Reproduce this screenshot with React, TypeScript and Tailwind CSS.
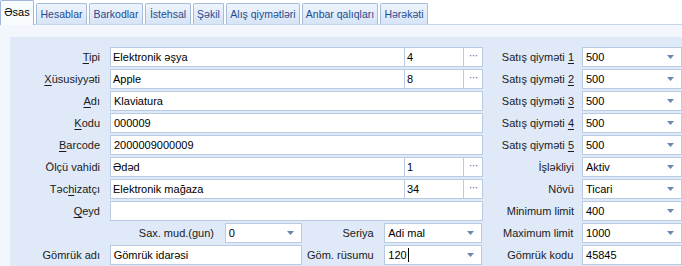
import React from 'react';

const font = { fontFamily: 'Tahoma, "Liberation Sans", Arial, sans-serif' };

function Arrow() {
  return (
    <svg width="7" height="4" viewBox="0 0 7 4" className="shrink-0">
      <path d="M0 0h7L3.5 4z" fill="#6a86b0" />
    </svg>
  );
}

function Label({ children, w }: { children: React.ReactNode; w: string }) {
  return <div className={`${w} shrink-0 text-right text-[#1b1b1b] leading-[20px]`}>{children}</div>;
}

function Input({ value, w }: { value?: string; w: string }) {
  return (
    <div className={`${w} h-[20px] shrink-0 bg-white border border-[#b9cbe3] pl-[3px] leading-[18px] text-black`}>
      {value}
    </div>
  );
}

function Combo({ value, w, cursor }: { value: string; w: string; cursor?: boolean }) {
  return (
    <div className={`${w} h-[20px] shrink-0 bg-white border border-[#b9cbe3] pl-[3px] pr-[7px] flex items-center justify-between text-black`}>
      <span className="leading-[18px] flex items-center">
        {value}
        {cursor && <span className="inline-block w-px h-[14px] bg-black ml-px" />}
      </span>
      <Arrow />
    </div>
  );
}

function Lookup({ text, num }: { text: string; num: string }) {
  return (
    <div className="w-[373px] h-[20px] shrink-0 flex bg-white border border-[#b9cbe3] text-black">
      <div className="w-[294px] pl-[2px] leading-[18px] border-r border-[#b9cbe3]">{text}</div>
      <div className="w-[59px] pl-[2px] leading-[18px] border-r border-[#b9cbe3]">{num}</div>
      <div className="flex-1 text-center text-[#5f7fae] text-[12px] leading-[14px] tracking-[-1px]">···</div>
    </div>
  );
}

const U = ({ c }: { c: string }) => <span className="underline underline-offset-2">{c}</span>;

const right = [
  { l: <>Satış qiyməti <U c="1" /></>, v: '500' },
  { l: <>Satış qiyməti <U c="2" /></>, v: '500' },
  { l: <>Satış qiyməti <U c="3" /></>, v: '500' },
  { l: <>Satış qiyməti <U c="4" /></>, v: '500' },
  { l: <>Satış qiyməti <U c="5" /></>, v: '500' },
  { l: <>İşləkliyi</>, v: 'Aktiv' },
  { l: <>Növü</>, v: 'Ticari' },
  { l: <>Minimum limit</>, v: '400' },
  { l: <>Maximum limit</>, v: '1000' },
];

const tabs = [
  { t: 'Hesablar', w: 'w-[51px]' },
  { t: 'Barkodlar', w: 'w-[54px]' },
  { t: 'İstehsal', w: 'w-[46px]' },
  { t: 'Şəkil', w: 'w-[31px]' },
  { t: 'Alış qiymətləri', w: 'w-[74px]' },
  { t: 'Anbar qalıqları', w: 'w-[76px]' },
  { t: 'Hərəkəti', w: 'w-[48px]' },
];

export default function App() {
  const left: React.ReactNode[] = [
    <><Label w="w-[90px]"><U c="T" />ipi</Label><div className="w-[10px]" /><Lookup text="Elektronik əşya" num="4" /></>,
    <><Label w="w-[90px]"><U c="X" />üsusiyyəti</Label><div className="w-[10px]" /><Lookup text="Apple" num="8" /></>,
    <><Label w="w-[90px]"><U c="A" />dı</Label><div className="w-[10px]" /><Input w="w-[373px]" value="Klaviatura" /></>,
    <><Label w="w-[90px]"><U c="K" />odu</Label><div className="w-[10px]" /><Input w="w-[373px]" value="000009" /></>,
    <><Label w="w-[90px]"><U c="B" />arcode</Label><div className="w-[10px]" /><Input w="w-[373px]" value="2000009000009" /></>,
    <><Label w="w-[90px]">Ölçü vahidi</Label><div className="w-[10px]" /><Lookup text="Ədəd" num="1" /></>,
    <><Label w="w-[90px]">Təc<U c="h" />izatçı</Label><div className="w-[10px]" /><Lookup text="Elektronik mağaza" num="34" /></>,
    <><Label w="w-[90px]"><U c="Q" />eyd</Label><div className="w-[10px]" /><Input w="w-[373px]" value="" /></>,
  ];

  return (
    <div className="w-[682px] h-[266px] overflow-hidden bg-[#f3f7fd] text-[11px]" style={font}>
      <div className="h-[25px] flex items-end border-b border-[#c3d3e8] bg-white">
        <div className="w-[34px] h-[25px] bg-[#f8fbfe] border border-b-0 border-[#9fb6d6] rounded-t-[2px] leading-[22px] text-center text-black -mb-px relative z-10">
          Əsas
        </div>
        {tabs.map((t) => (
          <div
            key={t.t}
            className={`${t.w} ml-[2px] h-[21px] whitespace-nowrap overflow-hidden text-center text-[10.5px] bg-gradient-to-b from-[#eef4fc] to-[#d6e4f7] border border-b-0 border-[#a6bcd9] rounded-t-[2px] leading-[20px] text-[#1f4b8f]`}
          >
            {t.t}
          </div>
        ))}
      </div>
      <div className="pt-[12px] pl-[10px]">
        <div className="bg-[#dfe9f8] h-[229px] pt-[10px] flex flex-col gap-[2px]">
          {left.map((l, i) => (
            <div key={i} className="flex h-[20px]">
              <div className="flex w-[473px]">{l}</div>
              <Label w="w-[91px]">{i < right.length ? right[i].l : null}</Label>
              <div className="w-[9px]" />
              {i < right.length && <Combo w="w-[100px]" value={right[i].v} />}
            </div>
          ))}
          <div className="flex h-[20px]">
            <Label w="w-[204px]">Sax. mud.(gun)</Label>
            <div className="w-[11px]" />
            <Combo w="w-[77px]" value="0" />
            <Label w="w-[72px]">Seriya</Label>
            <div className="w-[11px]" />
            <Combo w="w-[98px]" value="Adi mal" />
            <Label w="w-[91px]">Maximum limit</Label>
            <div className="w-[9px]" />
            <Combo w="w-[100px]" value="1000" />
          </div>
          <div className="flex h-[20px]">
            <Label w="w-[90px]">Gömrük adı</Label>
            <div className="w-[10px]" />
            <Input w="w-[192px]" value="Gömrük idarəsi" />
            <Label w="w-[72px]">Göm. rüsumu</Label>
            <div className="w-[11px]" />
            <Combo w="w-[98px]" value="120" cursor />
            <Label w="w-[91px]">Gömrük kodu</Label>
            <div className="w-[9px]" />
            <Input w="w-[100px]" value="45845" />
          </div>
        </div>
      </div>
    </div>
  );
}
